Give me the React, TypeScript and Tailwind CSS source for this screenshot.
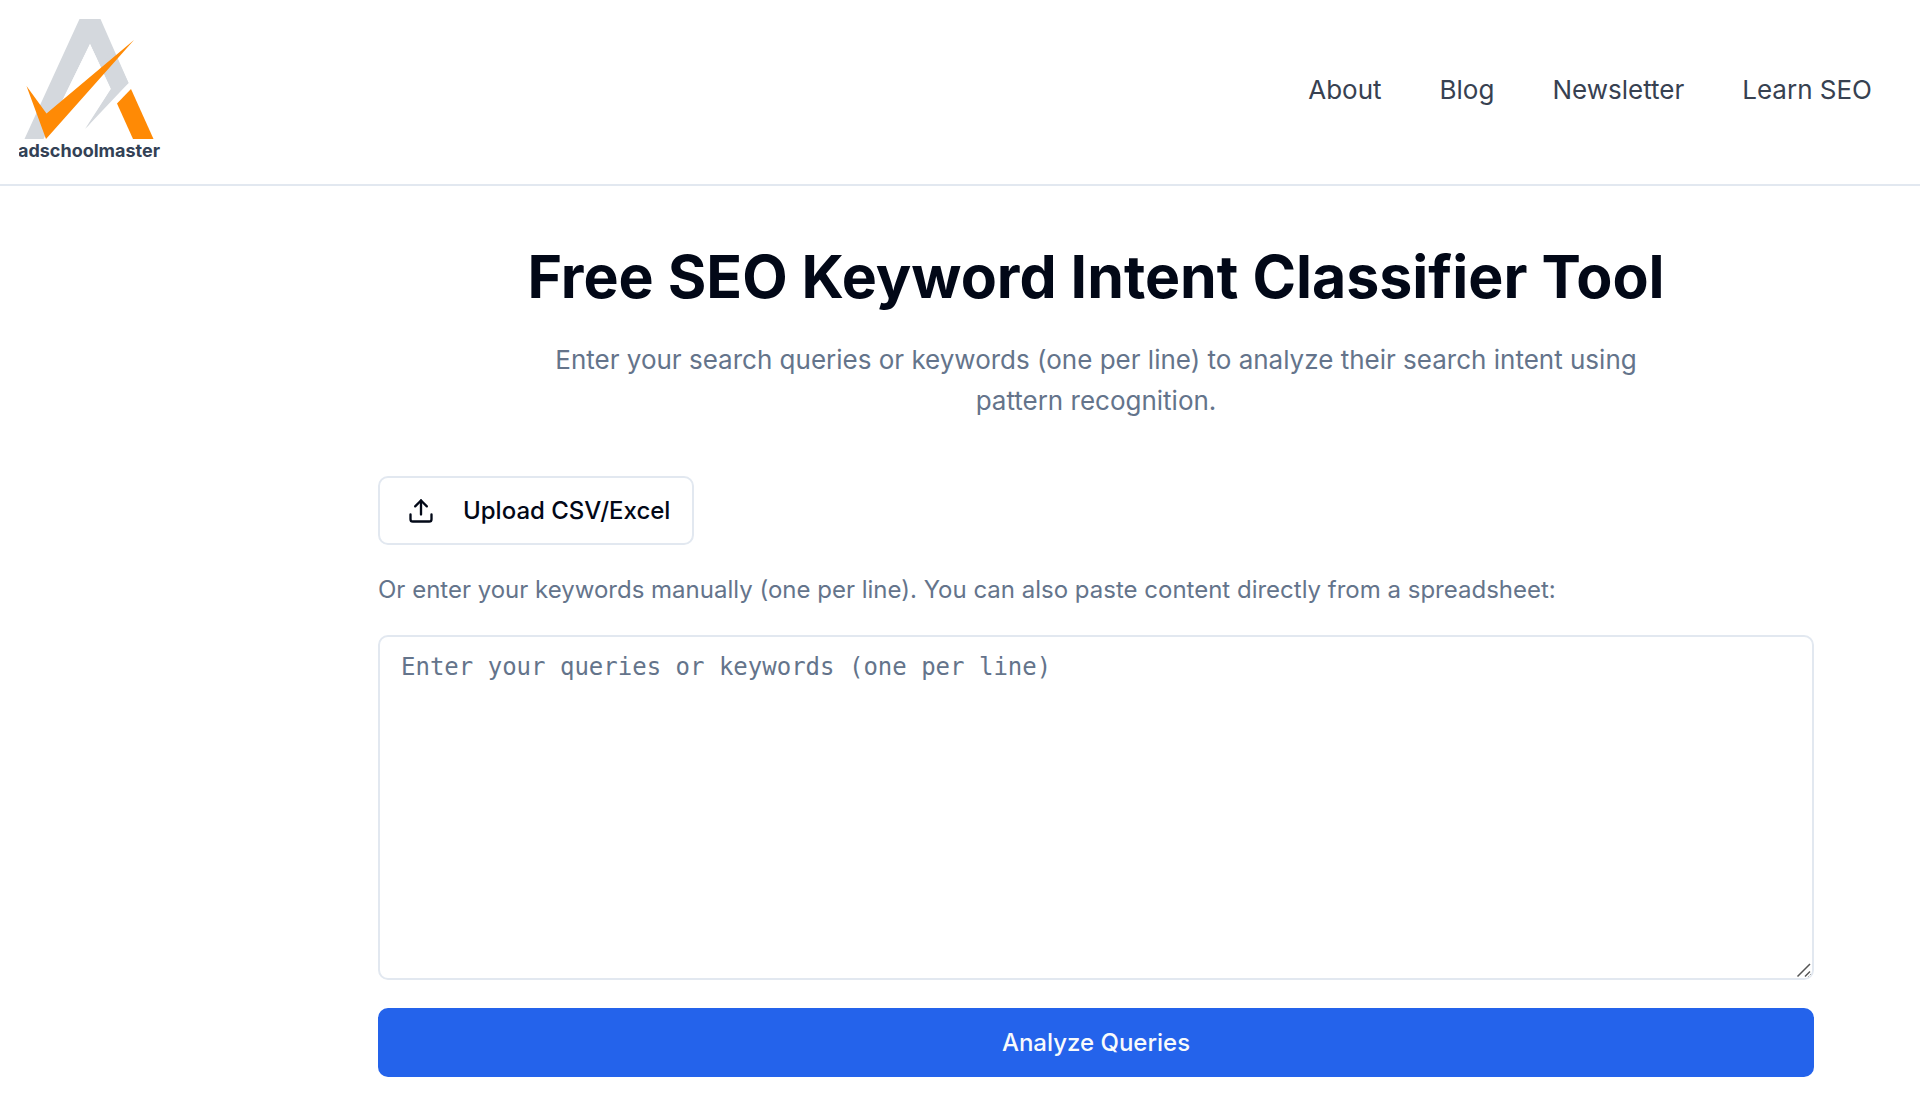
import { Upload } from "lucide-react";

const links = ["About", "Blog", "Newsletter", "Learn SEO"];

function Logo() {
  return (
    <a href="#" aria-label="adschoolmaster" className="block">
      <svg viewBox="0 0 142 142" className="block size-[142px]">
        <path d="M60.5 0H81.5L109.5 64L86 86L67 109.5L92 70L71 25L24.5 120H5.5Z" fill="#d4d8dd" />
        <path d="M71 25L28 113L60 88L92 70Z" fill="#ffffff" />
        <path d="M92 70L66 110L109.5 64L93 28L82 48Z" fill="#d4d8dd" />
        <path d="M7.5 67L27.5 94.5L115 21L27 120Z" fill="#ff8a05" />
        <path d="M98 84.5L112 70L134.5 120H114Z" fill="#ff8a05" />
        <text
          x="70"
          y="138"
          textAnchor="middle"
          fill="#334155"
          className="font-['Inter',sans-serif] text-[18px] font-bold"
        >
          adschoolmaster
        </text>
      </svg>
    </a>
  );
}

export default function App() {
  return (
    <div className="min-h-screen bg-white font-['Inter',sans-serif] text-[#020817]">
      <header className="flex items-start justify-between border-b-2 border-[#e2e8f0] pt-[19px] pr-12 pb-[23px] pl-[19px]">
        <Logo />
        <nav className="flex items-center gap-[58px] self-center text-[26px] leading-10 text-[#374151]">
          {links.map((label) => (
            <a key={label} href="#">
              {label}
            </a>
          ))}
        </nav>
      </header>

      <main className="pt-[55px] pr-[106px] pb-6 pl-[378px]">
        <div className="text-center">
          <h1 className="text-[59px] leading-[72px] font-bold">Free SEO Keyword Intent Classifier Tool</h1>
          <p className="mx-auto mt-[26px] max-w-[1150px] text-[26px] leading-[41px] text-[#64748b]">
            Enter your search queries or keywords (one per line) to analyze their search intent using pattern
            recognition.
          </p>
        </div>

        <button
          type="button"
          className="mt-[55px] flex h-[69px] items-center gap-7 rounded-[10px] border-2 border-[#e2e8f0] bg-white pr-[22px] pl-[27px] text-2xl font-medium"
        >
          <Upload className="size-7" />
          Upload CSV/Excel
        </button>

        <form onSubmit={(e) => e.preventDefault()}>
          <label htmlFor="queries" className="mt-7 block text-2xl leading-[34px] text-[#64748b]">
            Or enter your keywords manually (one per line). You can also paste content directly from a spreadsheet:
          </label>
          <div className="relative mt-7">
            <textarea
              id="queries"
              placeholder="Enter your queries or keywords (one per line)"
              className="block h-[345px] w-full resize-y rounded-[10px] border-2 border-[#e2e8f0] bg-white px-[21px] py-3 font-['DejaVu_Sans_Mono',monospace] text-2xl leading-9 placeholder:text-[#64748b]"
            />
            <svg
              viewBox="0 0 16 16"
              aria-hidden="true"
              className="pointer-events-none absolute right-0.5 bottom-0.5 size-4 rounded-br-lg bg-white"
              fill="none"
              stroke="#555555"
              strokeWidth="1.5"
            >
              <path d="M1.5 14.5L14 2M9 14.5L14 9.5" />
            </svg>
          </div>
          <button
            type="submit"
            className="mt-7 h-[69px] w-full rounded-[10px] bg-[#2463eb] text-2xl font-medium text-slate-50"
          >
            Analyze Queries
          </button>
        </form>
      </main>
    </div>
  );
}
